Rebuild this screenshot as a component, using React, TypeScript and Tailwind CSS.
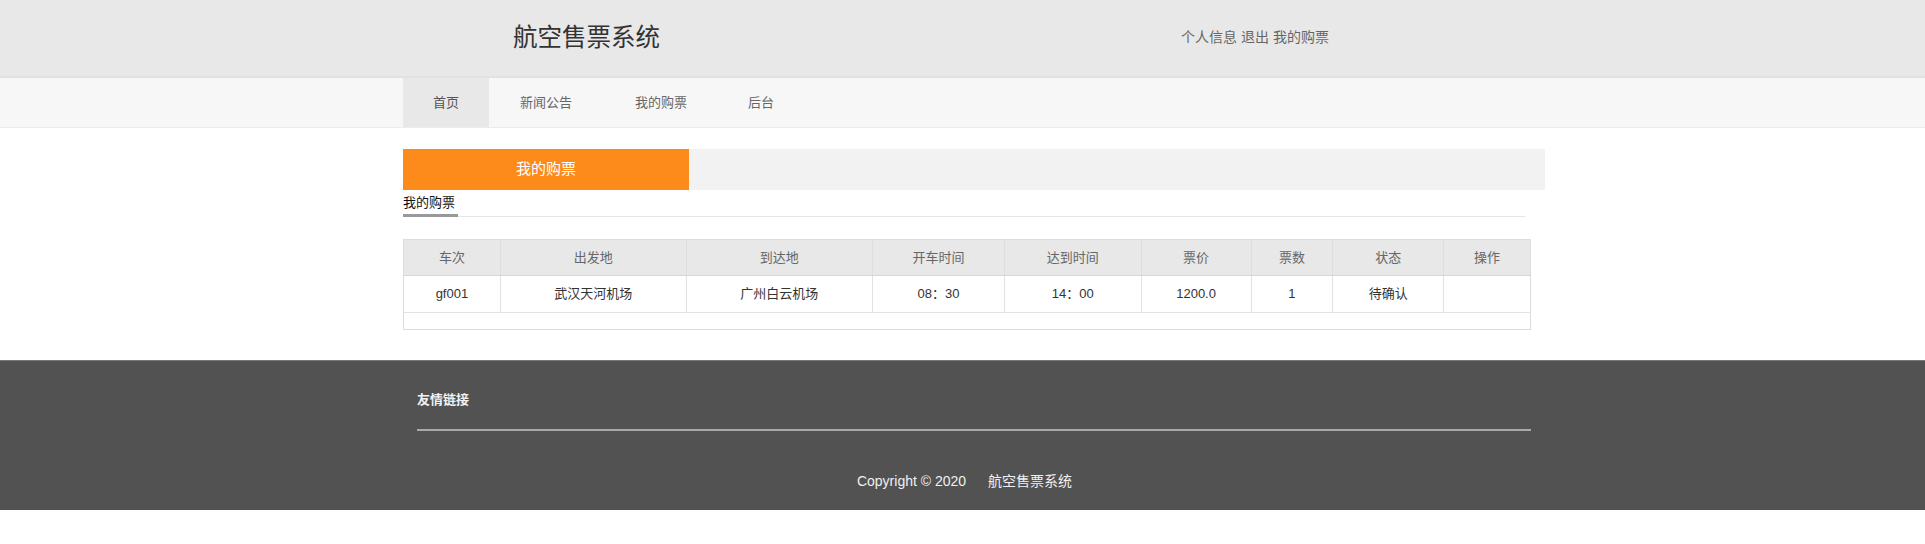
const font = {
  fontFamily: '"Liberation Sans", "Noto Sans CJK SC", sans-serif',
};

const columns = [
  { label: "车次", w: "w-[97px]" },
  { label: "出发地", w: "w-[186px]" },
  { label: "到达地", w: "w-[187px]" },
  { label: "开车时间", w: "w-[132px]" },
  { label: "达到时间", w: "w-[137px]" },
  { label: "票价", w: "w-[110px]" },
  { label: "票数", w: "w-[82px]" },
  { label: "状态", w: "w-[111px]" },
  { label: "操作", w: "w-[86px]" },
];

const row = ["gf001", "武汉天河机场", "广州白云机场", "08：30", "14：00", "1200.0", "1", "待确认", ""];

const navItems = ["首页", "新闻公告", "我的购票", "后台"];

export default function App() {
  return (
    <div className="min-h-[544px] w-full bg-white" style={font}>
      {/* header */}
      <div className="h-[78px] bg-[#e8e8e8] border-b-[2px] border-[#e2e2e2] flex items-center">
        <div className="ml-[513px] text-[24.5px] text-[#333] leading-none">航空售票系统</div>
        <div className="ml-[521px] -mt-[2px] text-[14px] text-[#666] flex gap-[4px]">
          <span>个人信息</span>
          <span>退出</span>
          <span>我的购票</span>
        </div>
      </div>

      {/* nav */}
      <div className="h-[50px] bg-[#f7f7f7] border-b border-[#ececec]">
        <div className="ml-[403px] flex h-full text-[13px] text-[#666]">
          {navItems.map((item, i) => (
            <div
              key={item}
              className={
                i === 0
                  ? "w-[86px] h-full flex items-center justify-center bg-[#e8e8e8] text-[#555]"
                  : i === 1
                    ? "w-[114px] h-full flex items-center justify-center"
                    : i === 2
                      ? "w-[116px] h-full flex items-center justify-center"
                      : "w-[84px] h-full flex items-center justify-center"
              }
            >
              {item}
            </div>
          ))}
        </div>
      </div>

      {/* content */}
      <div className="ml-[403px] w-[1142px] pt-[21px]">
        <div className="flex h-[41px]">
          <div className="w-[286px] bg-[#fd8b1b] text-white text-[15px] flex items-center justify-center">
            我的购票
          </div>
          <div className="flex-1 bg-[#f2f2f2]" />
        </div>
        <div className="mt-[3px] flex items-end w-[1122px] border-b border-[#e6e6e6]">
          <div className="text-[13px] text-[#111] leading-[20px] border-b-[3px] border-[#999] -mb-px pb-[1px] w-[55px]">
            我的购票
          </div>
        </div>

        <div className="mt-[22px] w-[1128px] border border-[#dcdcdc]">
          <div className="flex h-[36px] bg-[#e8e8e8] border-b border-[#d6d6d6] text-[13px] text-[#666]">
            {columns.map((c, i) => (
              <div
                key={c.label}
                className={`${c.w} flex items-center justify-center ${i < columns.length - 1 ? "border-r border-[#dedede]" : ""}`}
              >
                {c.label}
              </div>
            ))}
          </div>
          <div className="flex h-[37px] border-b border-[#e2e2e2] text-[13px] text-[#333]">
            {columns.map((c, i) => (
              <div
                key={c.label}
                className={`${c.w} flex items-center justify-center ${i < columns.length - 1 ? "border-r border-[#e2e2e2]" : ""}`}
              >
                {row[i]}
              </div>
            ))}
          </div>
          <div className="h-[16px]" />
        </div>
      </div>

      {/* footer */}
      <div className="mt-[30px] h-[150px] bg-[#525252] border-t border-[#777]">
        <div className="ml-[417px] w-[1114px] pt-[30px]">
          <div className="text-[13px] font-bold text-[#f2f2f2] leading-[18px]">友情链接</div>
          <div className="mt-[20px] border-t-[2px] border-[#a9a9a9]" />
        </div>
        <div className="mt-[40px] flex justify-center text-[14px] text-[#f0f0f0]">
          <div className="ml-[4px] flex gap-[22px]">
            <span>Copyright © 2020</span>
            <span>航空售票系统</span>
          </div>
        </div>
      </div>
    </div>
  );
}
